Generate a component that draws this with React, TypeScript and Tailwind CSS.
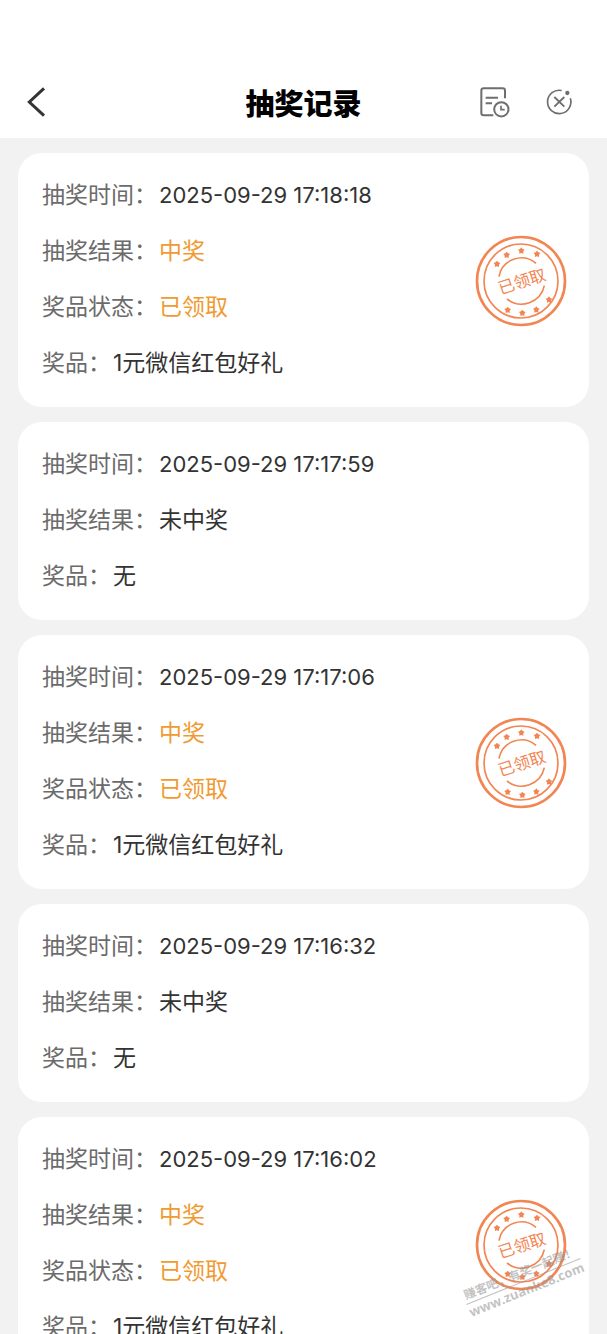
import React from 'react';

type DrawRecord = {
  time: string;
  result: string;
  status?: string;
  prize: string;
};

const records: DrawRecord[] = [
  { time: '2025-09-29 17:18:18', result: '中奖', status: '已领取', prize: '1元微信红包好礼' },
  { time: '2025-09-29 17:17:59', result: '未中奖', prize: '无' },
  { time: '2025-09-29 17:17:06', result: '中奖', status: '已领取', prize: '1元微信红包好礼' },
  { time: '2025-09-29 17:16:32', result: '未中奖', prize: '无' },
  { time: '2025-09-29 17:16:02', result: '中奖', status: '已领取', prize: '1元微信红包好礼' },
];

const stars = [
  [95, 115],
  [124, 88],
  [168, 75],
  [215, 85],
  [251, 222],
  [213, 252],
  [171, 262],
  [127, 253],
];

const BackIcon = () => (
  <svg viewBox="72 49 96 96" className="w-8 h-8" fill="none" stroke="#333436" strokeWidth="9">
    <path d="M132 56 L88 97 L132 138" />
  </svg>
);

const RecordIcon = () => (
  <svg viewBox="60 48 96 96" className="w-8 h-8" fill="none" stroke="#6e6e6e" strokeWidth="6">
    <path d="M138 85 V62 Q138 55 131 55 H74 Q67 55 67 62 V129 Q67 136 74 136 H103" />
    <path d="M80 83 H117 M80 100 H99" />
    <circle cx="127" cy="118" r="21.5" />
    <path d="M126 107 V119 H137" strokeWidth="5" />
  </svg>
);

const CloseIcon = () => (
  <svg viewBox="249 49 96 96" className="w-8 h-8" fill="none" stroke="#6e6e6e" strokeWidth="5">
    <path d="M305 62.5 A35 35 0 1 0 331 86" />
    <path d="M283 82 L313 111 M313 82 L283 111" strokeWidth="5.5" />
    <circle cx="322" cy="70" r="6.5" fill="#6e6e6e" stroke="none" />
  </svg>
);

const Stamp: React.FC<{ label: string }> = ({ label }) => (
  <svg
    viewBox="29 28 276 276"
    className="w-[92px] h-[92px] mt-1 shrink-0"
    fill="none"
    stroke="#f28552"
  >
    <circle cx="167" cy="166" r="132" strokeWidth="8" />
    <circle cx="167" cy="166" r="111" strokeWidth="5" />
    <path d="M101 153 A68 68 0 0 1 212 113" strokeWidth="5" />
    <path d="M125 220 A70 70 0 0 0 237 180" strokeWidth="5" />
    {stars.map(([x, y]) => (
      <path
        key={`${x}-${y}`}
        transform={`translate(${x} ${y})`}
        d="M0 -10 L4 -5 L10 -3 L6 2 L6 9 L0 7 L-6 9 L-6 2 L-10 -3 L-4 -5 Z"
        fill="#f28552"
        stroke="none"
      />
    ))}
    <text
      x="170"
      y="185"
      fontSize="49"
      textAnchor="middle"
      transform="rotate(-18 170 168)"
      fill="#f28552"
      stroke="none"
    >
      {label}
    </text>
  </svg>
);

const Row: React.FC<{ label: string; value: string; valueClass?: string }> = ({
  label,
  value,
  valueClass = 'text-[#333333]',
}) => (
  <div className="flex items-center gap-[2px] h-14">
    <dt className="text-[#6b6b6b]">{label}：</dt>
    <dd className={valueClass}>{value}</dd>
  </div>
);

const RecordCard: React.FC<{ record: DrawRecord }> = ({ record }) => {
  const won = Boolean(record.status);

  return (
    <li className="flex items-center justify-between shrink-0 bg-white rounded-3xl pt-[14px] pb-4 pl-6 pr-[22px]">
      <dl className="text-[23px] leading-8">
        <Row label="抽奖时间" value={record.time} valueClass="text-[22px] text-[#333333]" />
        <Row
          label="抽奖结果"
          value={record.result}
          valueClass={won ? 'text-[#f09a32]' : 'text-[#333333]'}
        />
        {record.status && (
          <Row label="奖品状态" value={record.status} valueClass="text-[#f09a32]" />
        )}
        <Row label="奖品" value={record.prize} />
      </dl>
      {record.status && <Stamp label={record.status} />}
    </li>
  );
};

export default function App() {
  return (
    <div
      lang="zh-CN"
      className="relative flex flex-col h-screen overflow-hidden bg-[#f2f2f2] font-['Inter','Noto_Sans_CJK_SC',sans-serif]"
    >
      {/* Header */}
      <header className="grid grid-cols-[1fr_auto_1fr] items-center shrink-0 bg-white px-6 pt-[66px] h-[138px]">
        <button type="button" aria-label="返回" className="justify-self-start">
          <BackIcon />
        </button>
        <h1 className="pt-[6px] text-[29px] leading-10 font-black text-black">抽奖记录</h1>
        <div className="flex items-center justify-self-end gap-8 mr-2">
          <button type="button" aria-label="记录">
            <RecordIcon />
          </button>
          <button type="button" aria-label="关闭">
            <CloseIcon />
          </button>
        </div>
      </header>

      {/* Records */}
      <ul className="flex flex-col flex-1 min-h-0 gap-[15px] px-[18px] py-[15px] overflow-y-auto [scrollbar-width:none]">
        {records.map((record) => (
          <RecordCard key={record.time} record={record} />
        ))}
      </ul>

      {/* Watermark */}
      <div className="absolute right-[22px] bottom-[36px] -rotate-22 text-center font-bold whitespace-nowrap text-[#999999]/60 pointer-events-none">
        <p className="text-[12px] leading-4 border-b border-[#999999]/60">赚客吧，有奖一起赚！</p>
        <p className="text-[13px] leading-4 font-['Open_Sans',sans-serif]">www.zuanke8.com</p>
      </div>
    </div>
  );
}
